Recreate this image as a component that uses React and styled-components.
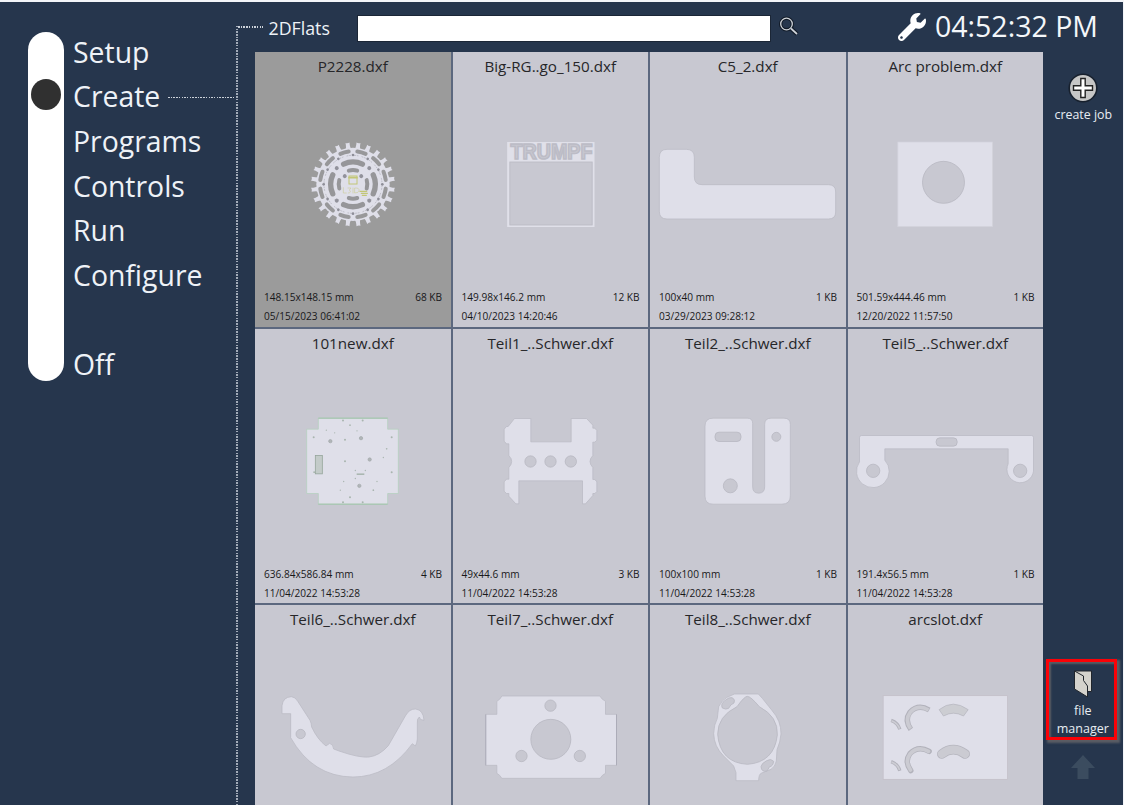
import React from "react";
import styled, { createGlobalStyle } from "styled-components";

const colors = {
  navy: "#26364d",
  tile: "#c8c8d1",
  tileActive: "#9b9b9b",
  part: "#dfdfe9",
  edge: "#b9b9c3",
  line: "#5c687f",
};

const GlobalStyle = createGlobalStyle`
  * { box-sizing: border-box; }
  body {
    margin: 0;
    background: #f3f5f9;
    font-family: "Open Sans", "Noto Sans", sans-serif;
  }
`;

const Screen = styled.div`
  display: flex;
  width: 1122.6px;
  height: 803px;
  margin-top: 2px;
  background: ${colors.navy};
  overflow: hidden;
`;

const Sidebar = styled.nav`
  display: flex;
  align-items: flex-start;
  width: 236px;
  padding: 30px 0 0 28px;
  flex: none;
`;

const Track = styled.div`
  width: 36px;
  height: 349px;
  padding: 47px 3px 0;
  border-radius: 18px;
  background: #fff;
`;

const Knob = styled.div`
  width: 30px;
  height: 31px;
  border-radius: 50%;
  background: #303030;
`;

const Menu = styled.div`
  flex: 1;
  padding: 0 0 0 9px;
  margin-top: -2.6px;
`;

const MenuItem = styled.div`
  display: flex;
  align-items: center;
  height: 44.65px;
  gap: 8px;
  color: #eef2f7;
  font-size: 28.4px;
  line-height: 44px;
  white-space: nowrap;
`;

const DotRow = styled.div`
  flex: ${(p) => (p.$width ? "none" : 1)};
  width: ${(p) => (p.$width ? `${p.$width}px` : "auto")};
  height: 1.5px;
  margin-top: ${(p) => (p.$width ? 0 : 2)}px;
  background: repeating-linear-gradient(90deg, #ccd2da 0 1.5px, transparent 1.5px 2.7px);
`;

const DotColumn = styled.div`
  flex: none;
  width: 2px;
  margin-top: 24px;
  background: repeating-linear-gradient(180deg, #a2abb8 0 1.5px, transparent 1.5px 2.7px);
`;

const Workspace = styled.main`
  flex: 1;
  display: flex;
  flex-direction: column;
  min-width: 0;
`;

const Header = styled.header`
  display: flex;
  align-items: center;
  height: 50px;
  flex: none;
`;

const FolderName = styled.div`
  width: 94px;
  padding-left: 5.5px;
  margin-top: 1px;
  color: #eef2f7;
  font-size: 17.8px;
`;

const SearchField = styled.input`
  width: 414px;
  height: 27px;
  margin-top: 3px;
  border: 1px solid #1b2636;
  border-radius: 0;
  background: #fff;
  outline: none;
`;

const SearchIcon = styled.svg`
  width: 22px;
  height: 22px;
  margin-left: 7px;
`;

const WrenchIcon = styled.svg`
  width: 28px;
  height: 28px;
  margin-left: 98px;
`;

const Clock = styled.div`
  margin: -2px 0 0 9px;
  color: #f4f7fa;
  font-size: 28.5px;
  line-height: 40px;
  white-space: nowrap;
`;

const Content = styled.div`
  display: flex;
  flex: 1;
  min-height: 0;
  padding-left: 17px;
`;

const FileGrid = styled.div`
  display: grid;
  grid-template-columns: repeat(4, 195.5px);
  grid-auto-rows: 274.5px;
  gap: 2px;
  width: 788px;
  height: 753px;
  background: ${colors.line};
  overflow: hidden;
`;

const Tile = styled.article`
  display: flex;
  flex-direction: column;
  background: ${(p) => (p.$active ? colors.tileActive : colors.tile)};
  overflow: hidden;
`;

const TileName = styled.div`
  height: 38px;
  flex: none;
  padding-top: 3px;
  color: #262629;
  font-size: 15.2px;
  line-height: 22px;
  text-align: center;
`;

const Drawing = styled.svg`
  display: block;
  width: 195.5px;
  height: 190px;
  flex: none;
`;

const Meta = styled.div`
  display: flex;
  justify-content: space-between;
  padding: ${(p) => (p.$first ? "7px" : "0")} 8.5px 0 9px;
  color: #18181a;
  font-size: 10.1px;
  line-height: ${(p) => (p.$first ? 20 : 18)}px;
  white-space: nowrap;
`;

const Rail = styled.aside`
  flex: 1;
  display: flex;
  flex-direction: column;
  align-items: center;
`;

const RailButton = styled.div`
  display: flex;
  flex-direction: column;
  align-items: center;
  margin-top: 20px;
  padding-left: 1px;
  color: #e8edf3;
  font-size: 12.4px;
  line-height: 21px;
  white-space: nowrap;
`;

const MarkedButton = styled.div`
  display: flex;
  flex-direction: column;
  align-items: center;
  gap: 3px;
  width: 71px;
  height: 81px;
  margin: auto 2px 15px 0;
  padding: 7px 0 0 2px;
  border: 3px solid #fb0207;
  box-shadow: 2px 2px 2px 1px #5a5d64, inset 2px 2px 2px #5a5d64;
  color: #e8edf3;
  font-size: 12.5px;
  line-height: 17.5px;
  text-align: center;
`;

const UpArrow = styled.svg`
  flex: none;
  width: 24px;
  height: 24px;
  margin: 0 0 26px 1px;
`;

const ring = (cx, cy, r, from, to) => {
  const pt = (a) => {
    const t = (a * Math.PI) / 180;
    return `${(cx + r * Math.sin(t)).toFixed(1)} ${(cy - r * Math.cos(t)).toFixed(1)}`;
  };
  return `M${pt(from)}A${r} ${r} 0 0 1 ${pt(to)}`;
};

const range = (n) => Array.from({ length: n }, (_, i) => i);

const Sprocket = () => (
  <g fill="none" strokeLinecap="round">
    {range(24).map((i) => (
      <path
        key={i}
        d="M300 87Q304 82 303 67Q309 70 315 67Q314 82 318 87Z"
        fill={colors.part}
        transform={`rotate(${i * 15 + 7.5} 309 193)`}
      />
    ))}
    <circle cx="309" cy="193" r="110" fill={colors.part} />
    {range(12).map((i) => (
      <path key={i} d={ring(309, 193, 99, i * 30 + 7.5, i * 30 + 22.5)} stroke="#98989a" strokeWidth="12" />
    ))}
    {range(24).map((i) => (
      <path key={i} d={ring(309, 193, 87, i * 15 + 3, i * 15 + 10)} stroke="#b3b3bd" strokeWidth="2.5" strokeDasharray="3 5" />
    ))}
    {range(4).map((i) => (
      <g key={i} stroke="#969699">
        <path d={ring(309, 193, 67, i * 90 - 25, i * 90 + 25)} strokeWidth="16" />
        <path d={ring(309, 193, 43, i * 90 - 17, i * 90 + 17)} strokeWidth="12" />
      </g>
    ))}
    {range(12).map((i) => (
      <circle key={i} cx="309" cy="105" r="4" fill="#8e8e98" transform={`rotate(${i * 30} 309 193)`} />
    ))}
    {range(4).map((i) => (
      <g key={i} fill="#92929b" transform={`rotate(${45 + i * 90} 309 193)`}>
        <circle cx="309" cy="124" r="6" />
        {(i === 0 || i === 3) && <circle cx="309" cy="158" r="6" />}
      </g>
    ))}
    <g stroke="#c2c676" strokeWidth="3">
      <rect x="297" y="168" width="24" height="24" />
      <path d="M297 173h24" strokeWidth="5" />
      <path d="M280 203v16h9M294 204h9l-5 6q8 8-3 9M309 204v15M315 204q14-1 12 8q-1 7-12 7z" strokeWidth="2" opacity=".65" />
      <path d="M330 214h20M334 220h18M337 226h12" strokeWidth="4" />
    </g>
  </g>
);

const Nameplate = () => (
  <g>
    <path fillRule="evenodd" d="M170 66H432V321H170ZM178 126V315H425V126Z" fill="#e0e0e9" />
    <rect x="178" y="126" width="247" height="189" fill="none" stroke={colors.edge} strokeWidth="2.5" />
    <text
      x="180"
      y="117"
      fontFamily="Liberation Sans, sans-serif"
      fontWeight="700"
      fontSize="65"
      textLength="246"
      lengthAdjust="spacingAndGlyphs"
      fill="#c8c8d1"
      stroke="#bcbcc6"
      strokeWidth="5"
    >
      TRUMPF
    </text>
  </g>
);

const partStyle = { fill: colors.part, stroke: colors.edge, strokeWidth: 2.2, fillRule: "evenodd" };
const hole = { fill: colors.tile, stroke: "#b5b5bf", strokeWidth: 2.2 };

const Bracket = () => (
  <path {...partStyle} d="M43 112Q43 88 66 88H124Q148 88 148 112V171Q148 194 171 194H550Q572 194 572 216V276Q572 297 550 297H66Q43 297 43 274Z" />
);

const Plate = () => (
  <g>
    <rect {...partStyle} stroke="#d2d2db" x="757" y="66" width="284" height="254" />
    <circle {...hole} cx="894" cy="187" r="63" />
  </g>
);

const specks = [
  [279, 60, 3], [338, 60, 3], [300, 74, 2.5], [229, 89, 2], [254, 97, 2], [321, 91, 2], [191, 110, 3],
  [425, 110, 3], [285, 118, 3], [410, 145, 2.5], [285, 182, 3], [400, 171, 2], [346, 210, 2], [425, 215, 3],
  [316, 210, 2], [281, 243, 2], [381, 243, 2], [271, 269, 2], [370, 269, 2.5], [300, 290, 3], [279, 305, 3],
  [338, 305, 3], [316, 234, 2],
];

const Panel = () => (
  <g>
    <path {...partStyle} stroke="#b3d1bd" d="M205 53H413V86H445V279H413V311H205V279H170V86H205Z" />
    <path d="M205 53H413M205 311H413" stroke="#a0c2ab" strokeWidth="3" />
    {specks.map(([x, y, r]) => (
      <circle key={`${x}-${y}`} cx={x} cy={y} r={r} fill="#a9b5af" />
    ))}
    {[[241, 122], [333, 113], [359, 177], [328, 256]].map(([x, y]) => (
      <circle key={x} cx={x} cy={y} r="5" fill="#b1b5b8" stroke="#a2a8a9" strokeWidth="2" />
    ))}
    <rect x="196" y="165" width="21" height="55" fill="#c3cbc9" stroke="#95a59b" strokeWidth="2.4" />
    <path d="M320 221H343" stroke="#9fafa5" strokeWidth="4" />
    <path d="M190 215h6" stroke="#9fafa5" strokeWidth="4" />
  </g>
);

const Spacer = () => (
  <g>
    <path
      {...partStyle}
      d="M792 54H841V124H962V54H1008L1027 74V83H1033L1039 90V119L1033 125H1027V165Q1010 183 1027 201V237H1033L1039 244V273L1033 279H1027V285L1005 310H996V241H805V310H796L775 287V279H768L761 272V244L768 236H775V201Q792 183 775 165V130H768L761 122V86L768 78H773Z"
    />
    {[840, 900, 961].map((x) => (
      <circle {...hole} key={x} cx={x} cy="183" r="17" />
    ))}
  </g>
);

const SlotPlate = () => (
  <g>
    <path
      {...partStyle}
      d="M204 53H307Q323 53 323 69V259Q323 278 341 278Q359 278 359 259V72Q359 53 378 53H417Q436 53 436 72V286Q436 311 411 311H204Q180 311 180 287V77Q180 53 204 53Z"
    />
    <rect {...hole} x="210" y="95" width="78" height="28" rx="12" />
    <circle {...hole} cx="394" cy="109" r="13.5" />
    <circle {...hole} cx="256" cy="256" r="21" />
  </g>
);

const Handle = () => (
  <g>
    <path
      {...partStyle}
      d="M648 105H1158Q1164 105 1164 111V212A40 40 0 1 1 1088 190V145H718V179A49 49 0 1 1 642 184V111Q642 105 648 105Z"
    />
    <rect {...hole} x="872" y="112" width="63" height="25" rx="11" />
    <circle {...hole} cx="683" cy="211" r="20" />
    <circle {...hole} cx="1124" cy="211" r="20" />
  </g>
);

const Cradle = () => (
  <g>
    <path
      {...partStyle}
      d="M96 341V317Q99 291 124 290Q137 291 144 305L180 361Q184 369 185 381Q202 418 228 438L239 430Q250 433 251 447L270 454Q328 474 357 471Q389 467 415 437L466 348Q478 326 497 327Q520 330 522 361Q509 361 508 351Q500 357 502 369V417Q501 430 496 438L487 431Q414 531 309 531Q188 530 122 413V341Z"
    />
    <circle {...hole} cx="152" cy="402" r="14" />
  </g>
);

const Flange = () => (
  <g>
    <path
      {...partStyle}
      d="M754 288H1048Q1054 299 1065 304V343H1098V496H1065V520Q1055 524 1049 535H754Q749 525 739 520V496H705V343H739V304Q749 299 754 288Z"
    />
    <path d="M706 343V496M1098 343V496" stroke="#acacb8" strokeWidth="3" />
    <circle {...hole} cx="901" cy="418" r="60" />
    <circle {...hole} cx="900" cy="317" r="17" />
    <circle {...hole} cx="813" cy="468" r="17" />
    <circle {...hole} cx="988" cy="468" r="17" />
  </g>
);

const Clamp = () => (
  <g>
    <path
      {...partStyle}
      d="M268 282H340L352 295L380 330Q409 363 408 402Q406 427 396 449L394 483Q391 500 378 508L350 519Q341 522 341 542H273V518L266 498L236 468Q207 440 206 400Q207 373 217 355L221 320Q231 300 246 292Z"
    />
    <path {...hole} d="M307 289Q317 289 343 320Q400 350 397 405Q388 487 307 493Q225 488 218 403Q218 348 276 320Q298 289 307 289Z" />
    <path {...hole} d="M239 302Q253 290 262 293Q272 299 267 309Q256 313 251 325Q243 330 232 324Q226 312 239 302Z" />
    <path {...hole} d="M365 482Q378 474 386 484Q384 499 374 500L366 513Q349 517 348 500Q349 490 365 482Z" />
  </g>
);

const ArcSlots = () => (
  <g fill="none">
    <rect {...partStyle} stroke="#c2bec7" x="713" y="287" width="373" height="251" />
    {[0, 124].map((dy) => (
      <g key={dy} transform={`translate(0 ${dy})`}>
        <path d="M737 361Q757 368 763 388" stroke="#b2b2bb" strokeWidth="10" />
        <path d="M738 362Q757 369 762 386" stroke="#cdcdd4" strokeWidth="5" />
        <path d="M796 388Q776 361 793 337Q818 311 851 330" stroke="#b2b2bb" strokeWidth="16" strokeLinecap={dy ? "round" : "butt"} />
        <path d="M795 386Q777 360 794 337Q818 312 849 330" stroke="#cbcbd2" strokeWidth="11" strokeLinecap={dy ? "round" : "butt"} />
      </g>
    ))}
    <path {...hole} fill="#cccdd2" d="M881 329Q922 296 968 329L954 348Q924 331 894 348Z" />
    <path d="M889 462Q923 436 959 462" stroke="#b5b5be" strokeWidth="29" strokeLinecap="round" />
    <path d="M889 462Q923 436 959 462" stroke="#cbcbd2" strokeWidth="24" strokeLinecap="round" />
  </g>
);

const files = [
  { name: "P2228.dxf", size: "148.15x148.15 mm", kb: "68 KB", date: "05/15/2023 06:41:02", Art: Sprocket, origin: "15 -90", active: true },
  { name: "Big-RG..go_150.dxf", size: "149.98x146.2 mm", kb: "12 KB", date: "04/10/2023 14:20:46", Art: Nameplate, origin: "7.5 -90" },
  { name: "C5_2.dxf", size: "100x40 mm", kb: "1 KB", date: "03/29/2023 09:28:12", Art: Bracket, origin: "15 -90" },
  { name: "Arc problem.dxf", size: "501.59x444.46 mm", kb: "1 KB", date: "12/20/2022 11:57:50", Art: Plate, origin: "607.5 -90" },
  { name: "101new.dxf", size: "636.84x586.84 mm", kb: "4 KB", date: "11/04/2022 14:53:28", Art: Panel, origin: "15 -100.5" },
  { name: "Teil1_..Schwer.dxf", size: "49x44.6 mm", kb: "3 KB", date: "11/04/2022 14:53:28", Art: Spacer, origin: "607.5 -100.5" },
  { name: "Teil2_..Schwer.dxf", size: "100x100 mm", kb: "1 KB", date: "11/04/2022 14:53:28", Art: SlotPlate, origin: "15 -100.5" },
  { name: "Teil5_..Schwer.dxf", size: "191.4x56.5 mm", kb: "1 KB", date: "11/04/2022 14:53:28", Art: Handle, origin: "607.5 -100.5" },
  { name: "Teil6_..Schwer.dxf", Art: Cradle, origin: "15 129" },
  { name: "Teil7_..Schwer.dxf", Art: Flange, origin: "607.5 129" },
  { name: "Teil8_..Schwer.dxf", Art: Clamp, origin: "15 129" },
  { name: "arcslot.dxf", Art: ArcSlots, origin: "607.5 129" },
];

const menu = ["Setup", "Create", "Programs", "Controls", "Run", "Configure", "", "Off"];

const FileTile = ({ file }) => {
  const { name, size, kb, date, Art, origin, active } = file;
  return (
    <Tile $active={active}>
      <TileName>{name}</TileName>
      <Drawing viewBox={`${origin} 586.5 570`}>
        <Art />
      </Drawing>
      {size && (
        <>
          <Meta $first>
            <span>{size}</span>
            <span>{kb}</span>
          </Meta>
          <Meta>{date}</Meta>
        </>
      )}
    </Tile>
  );
};

export default function App() {
  return (
    <>
      <GlobalStyle />
      <Screen>
        <Sidebar>
          <Track>
            <Knob />
          </Track>
          <Menu>
            {menu.map((label) => (
              <MenuItem key={label}>
                {label}
                {label === "Create" && <DotRow />}
              </MenuItem>
            ))}
          </Menu>
        </Sidebar>
        <DotColumn />
        <Workspace>
          <Header>
            <DotRow $width={25} />
            <FolderName>2DFlats</FolderName>
            <SearchField />
            <SearchIcon viewBox="0 0 22 22" fill="none">
              <circle cx="8.5" cy="8" r="5.8" stroke="#111a27" strokeWidth="3.4" />
              <path d="M13 12.5L19 18" stroke="#111a27" strokeWidth="4.2" />
              <circle cx="8.5" cy="8" r="5.8" stroke="#cfd4da" strokeWidth="1.3" />
              <path d="M13 12.5L19 18" stroke="#cfd4da" strokeWidth="1.7" />
            </SearchIcon>
            <WrenchIcon viewBox="0 0 512 512" fill="#fff">
              <path d="M507.7 109.1c-2.2-9-13.5-12.1-20.1-5.5l-74.4 74.4-67.9-11.3-11.3-67.9 74.4-74.4c6.6-6.6 3.4-17.9-5.7-20.2-47.4-11.7-99.6.9-136.6 37.9-39.6 39.6-50.5 97.1-34.1 147.2L18.7 402.8c-25 25-25 65.5 0 90.5s65.5 25 90.5 0l213.2-213.2c50.1 16.7 107.5 5.7 147.4-34.2 37.1-37.1 49.7-89.3 37.9-136.8zM64 472c-13.3 0-24-10.8-24-24 0-13.3 10.7-24 24-24s24 10.7 24 24c0 13.2-10.7 24-24 24z" />
            </WrenchIcon>
            <Clock>04:52:32 PM</Clock>
          </Header>
          <Content>
            <FileGrid>
              {files.map((file) => (
                <FileTile key={file.name} file={file} />
              ))}
            </FileGrid>
            <Rail>
              <RailButton>
                <svg width="32" height="32" viewBox="0 0 32 32">
                  <circle cx="16" cy="16" r="13.8" fill="#c6c6c6" stroke="#17202d" strokeWidth="1.6" />
                  <path d="M13.8 6.5h4.4v7.3h7.3v4.4h-7.3v7.3h-4.4v-7.3h-7.3v-4.4h7.3z" fill="#fff" stroke="#222" strokeWidth="1.4" />
                </svg>
                <span>create job</span>
              </RailButton>
              <MarkedButton>
                <svg width="22" height="30" viewBox="0 0 22 30" fill="#d4d2cc" stroke="#20252c" strokeWidth="1">
                  <path d="M2.5 2H19.5V22.5H13L2.5 2z" />
                  <path d="M2.5 2L11.5 7V11.5L15.5 17V28L2.5 20z" />
                </svg>
                <span>
                  file
                  <br />
                  manager
                </span>
              </MarkedButton>
              <UpArrow viewBox="0 0 24 24" fill="#3b4c5f">
                <path d="M12 0L24 13H17.5V24H6.5V13H0Z" />
              </UpArrow>
            </Rail>
          </Content>
        </Workspace>
      </Screen>
    </>
  );
}
